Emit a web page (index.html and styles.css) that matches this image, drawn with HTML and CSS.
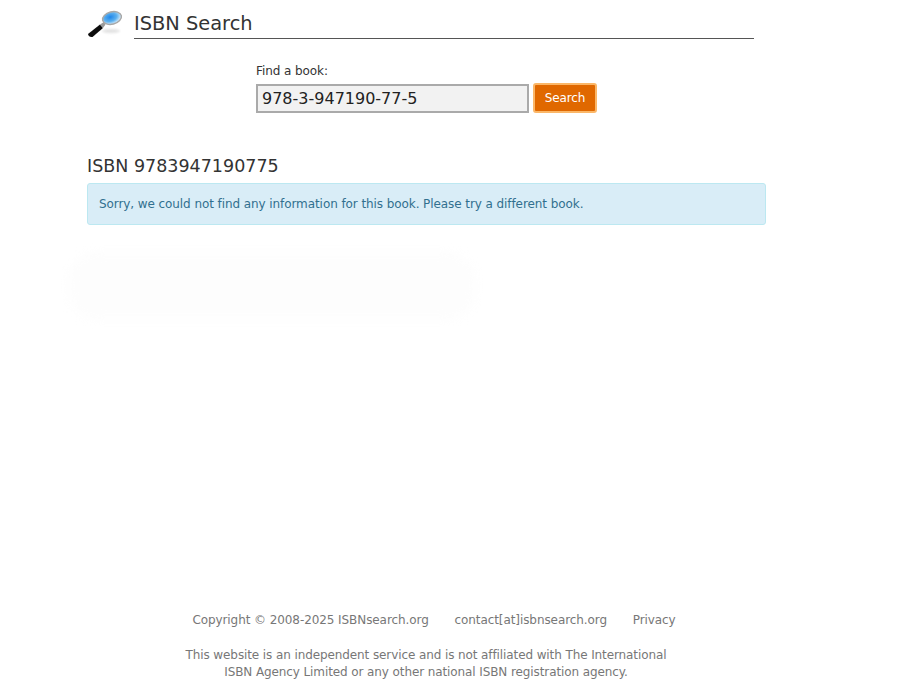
FILE: index.html
```html
<!DOCTYPE html>
<html lang="en">
<head>
    <meta charset="UTF-8">
    <title>ISBN Search</title>
    <link rel="stylesheet" href="styles.css">
</head>
<body>
    <div class="smudge"></div>
    <div class="page">
        <header class="site-head">
            <svg class="logo" width="36" height="30" viewBox="0 0 36 30">
                <defs>
                    <radialGradient id="lens" cx="42%" cy="40%" r="62%">
                        <stop offset="0" stop-color="#1f86ea"/>
                        <stop offset="0.55" stop-color="#5cb0ee"/>
                        <stop offset="1" stop-color="#e4f2fb"/>
                    </radialGradient>
                    <filter id="soft" x="-20%" y="-20%" width="140%" height="140%">
                        <feGaussianBlur stdDeviation="0.35"/>
                    </filter>
                    <filter id="softer" x="-20%" y="-50%" width="140%" height="200%">
                        <feGaussianBlur stdDeviation="1.2"/>
                    </filter>
                </defs>
                <ellipse cx="24" cy="23" rx="9" ry="2.2" fill="#e4e4e4" filter="url(#softer)"/>
                <g filter="url(#soft)">
                    <path d="M1 26 L13 16.5 L16 20 L5.5 29 Q1.5 29.5 1 26 Z" fill="#111"/>
                    <path d="M13 16.5 L17 14 L18.5 16.5 L16 20 Z" fill="#9a9a9a"/>
                    <ellipse cx="25" cy="10" rx="9.6" ry="6.2" transform="rotate(-14 25 10)" fill="url(#lens)" stroke="#a8a8a8" stroke-width="1.5"/>
                </g>
            </svg>
            <h1 class="site-title">ISBN Search</h1>
        </header>

        <form class="search-form" onsubmit="return false;">
            <label class="search-label" for="q">Find a book:</label>
            <div class="search-row">
                <input class="search-input" id="q" type="text" value="978-3-947190-77-5">
                <button class="search-btn" type="submit">Search</button>
            </div>
        </form>

        <h2 class="result-title">ISBN 9783947190775</h2>
        <div class="alert">Sorry, we could not find any information for this book. Please try a different book.</div>
    </div>

    <footer class="site-foot">
        <p class="foot-links">
            <span>Copyright © 2008-2025 ISBNsearch.org</span>
            <span>contact[at]isbnsearch.org</span>
            <span>Privacy</span>
        </p>
        <p class="foot-note">This website is an independent service and is not affiliated with The International<br>ISBN Agency Limited or any other national ISBN registration agency.</p>
    </footer>
</body>
</html>
```

FILE: styles.css
```css
html, body {
    margin: 0;
    height: 683px;
    overflow: hidden;
}
body {
    position: relative;
    background: #fff;
    color: #333;
    font-family: "DejaVu Sans", Verdana, sans-serif;
    font-size: 12px;
    letter-spacing: -0.08px;
    display: flex;
    flex-direction: column;
}
.page {
    width: 679px;
    margin-left: 87px;
    flex: 1;
}
.site-head {
    display: flex;
    align-items: flex-end;
    width: 667px;
    height: 39px;
}
.logo {
    margin-right: 11px;
    margin-bottom: 1px;
    flex: none;
}
.site-title {
    flex: 1;
    margin: 0;
    font-size: 19.4px;
    font-weight: normal;
    letter-spacing: 0;
    line-height: 32px;
    border-bottom: 1px solid #555;
    height: 30px;
}
.search-form {
    margin: 24px 0 0 169px;
}
.search-label {
    display: block;
    line-height: 16px;
    margin-bottom: 4px;
}
.search-row {
    display: flex;
    gap: 4px;
    align-items: center;
}
.search-input {
    box-sizing: border-box;
    width: 273px;
    height: 29px;
    padding: 0 4px;
    border: 2px solid #aaa;
    background: #f2f2f2;
    color: #222;
    font-family: inherit;
    font-size: 16px;
}
.search-btn {
    box-sizing: border-box;
    width: 64px;
    height: 30px;
    border: 2px solid #fbb768;
    border-radius: 3px;
    background: #e06800;
    color: #fff;
    font-family: inherit;
    font-size: 12px;
    letter-spacing: -0.08px;
    padding: 0;
}
.result-title {
    margin: 41px 0 5px;
    font-size: 17.5px;
    font-weight: normal;
    letter-spacing: 0;
    line-height: 24px;
}
.alert {
    box-sizing: border-box;
    height: 42px;
    padding: 0 11px;
    line-height: 40px;
    background: #d9edf7;
    border: 1px solid #bce8f1;
    border-radius: 3px;
    color: #31708f;
}
.smudge {
    position: absolute;
    left: 68px;
    top: 252px;
    width: 408px;
    height: 68px;
    background: #fdfdfd;
    border-radius: 30px;
    filter: blur(5px);
}
.site-foot {
    color: #777;
    text-align: center;
    width: 852px;
    padding-bottom: 2px;
}
.foot-links {
    margin: 0 0 18px;
    padding-left: 16px;
    line-height: 17px;
}
.foot-links span {
    margin: 0 11px;
}
.foot-note {
    margin: 0;
    letter-spacing: -0.1px;
    line-height: 17px;
}
```
